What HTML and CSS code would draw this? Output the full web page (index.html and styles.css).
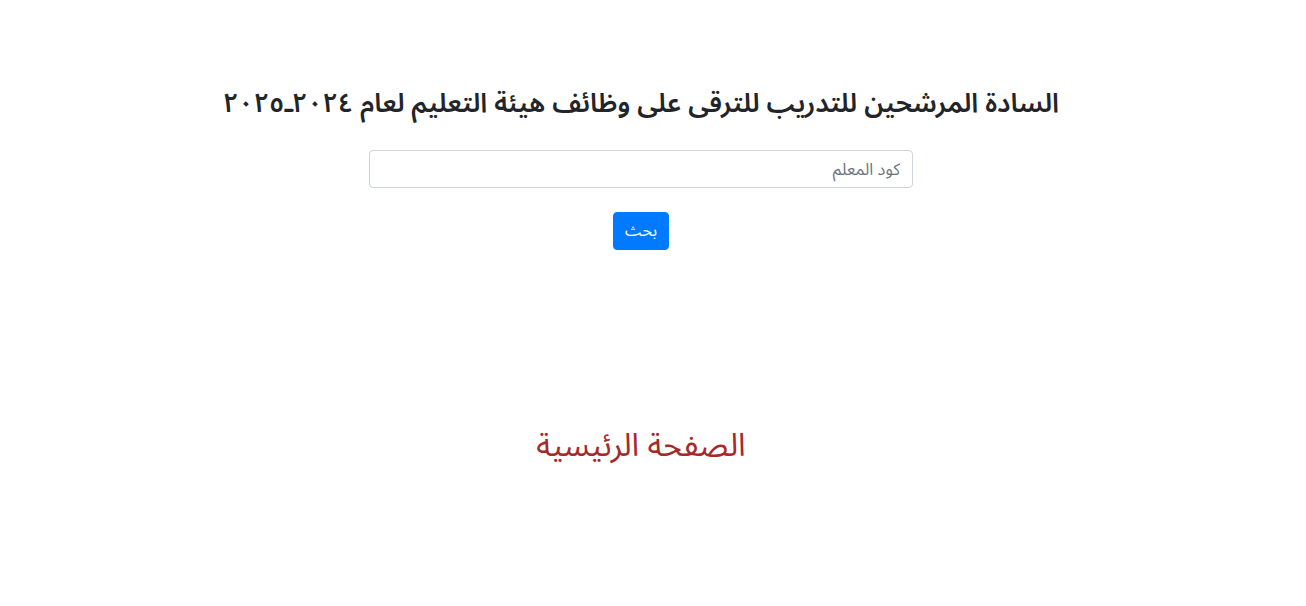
FILE: index.html
```html
<!DOCTYPE html>
<html lang="ar" dir="rtl">
<head>
	<meta charset="UTF-8">
	<title>البحث</title>
	<link rel="stylesheet" href="styles.css">
</head>
<body>
	<div class="page">
		<h3 class="title">السادة المرشحين للتدريب للترقى على وظائف هيئة التعليم لعام ٢٠٢٤ـ٢٠٢٥</h3>
		<form class="search" action="" method="">
			<input type="text" class="input" placeholder="كود المعلم">
			<button type="button" class="btn">بحث</button>
		</form>
		<div class="home">
			<a href="###">الصفحة الرئيسية</a>
		</div>
	</div>
</body>
</html>
```

FILE: styles.css
```css
body{margin:0;padding:0;background:#fff;font-size:16px;color:#212529;font-family:"Noto Sans Arabic","Noto Sans",sans-serif;}
form,h3{margin:0;padding:0;}
a{text-decoration:none;}

.page{
	margin-right: 24px;
	padding-top: 84px;
	text-align: center;
}

.title{
	font-size: 26.8px;
	font-weight: 600;
	line-height: 40px;
}

.search{
	display: flex;
	flex-direction: column;
	align-items: center;
	gap: 24px;
	margin-top: 26px;
}

.search .input{
	box-sizing: border-box;
	width: 544px;
	height: 38px;
	padding: 6px 12px;
	font-size: 16.5px;
	font-family: inherit;
	color: #495057;
	border: 1px solid #ced4da;
	border-radius: 4px;
	direction: rtl;
}

.search .input::placeholder{
	color: #6c757d;
}

.search .btn{
	box-sizing: border-box;
	width: 56px;
	height: 38px;
	font-size: 16px;
	font-family: inherit;
	color: #fff;
	background: #007bff;
	border: 1px solid #007bff;
	border-radius: 4px;
	cursor: pointer;
}

.home{
	margin-top: 172px;
}

.home a{
	font-size: 32px;
	color: #a52a2a;
	line-height: 48px;
}
```
